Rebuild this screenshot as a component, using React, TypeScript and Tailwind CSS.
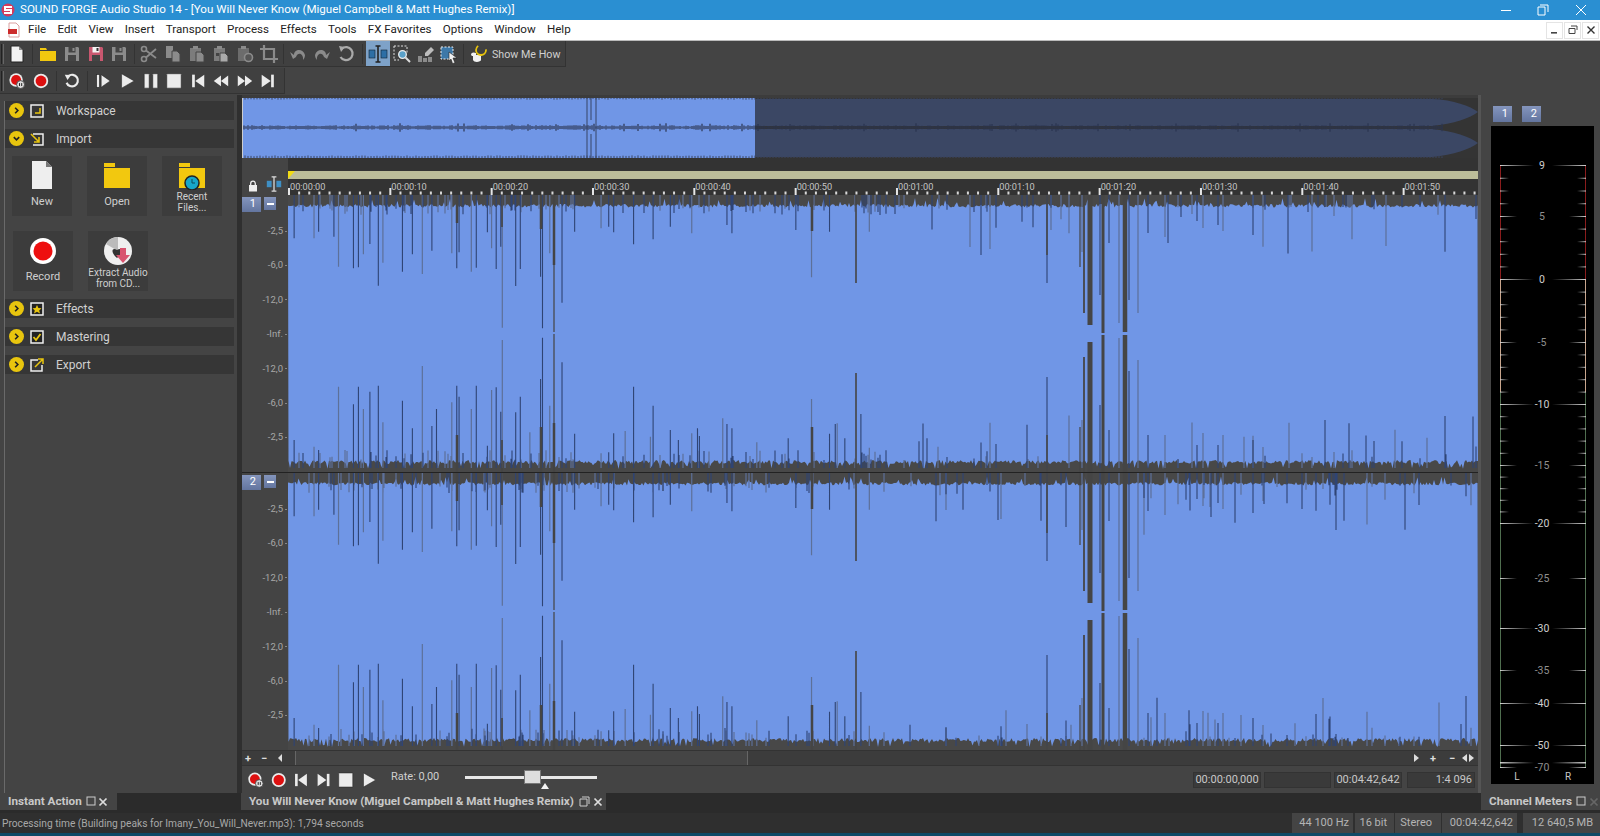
import React, { useMemo } from "react";

function mk(seed: number) {
  let a = seed >>> 0;
  return () => {
    a = (a + 0x6d2b79f5) >>> 0;
    let t = a;
    t = Math.imul(t ^ (t >>> 15), t | 1);
    t ^= t + Math.imul(t ^ (t >>> 7), t | 61);
    return ((t ^ (t >>> 14)) >>> 0) / 4294967296;
  };
}

const W = 1190;
const H = 277;
const SP: number[][] = [
  [16,130,735],[68,130,755],[80,110,765],[120,125,0],[132,215,575],[171,220,628],[184,217,575],[197,178,642],[214,147,590],[236,272,572],[248,203,682],[299,230,617],[325,178,700],[351,237,513],[376,167,693],[388,0,642],[428,175,622],[441,220,572],[447,172,605],[479,230,642],[492,218,572],[521,112,752],[532,160,585],[544,222,577],[556,155,650],[560,398,435],[595,273,652],[607,222,605],[632,0,712],[660,245,552],[665,400,428],[684,175,632],[716,323,502],[749,110,716],[818,100,775],[838,95,772],[851,112,715],[881,0,708],[903,148,575],[954,133,632],[947,0,725],[999,95,705],[1020,0,735],[1055,115,715],[1070,0,700],[1075,0,723],[1136,0,670],[1147,90,687],[1160,115,700],[1225,0,742],[1307,0,730],[1327,105,0],[1368,247,612],[1415,110,716],[1430,0,687],[1435,0,685],[1455,0,730],[1497,0,657],[1519,110,758],
];
const COLS: number[][] = [
  [169,2.5,28,240],[214,1.6,32,245],[253,2.5,34,232],[266,2.5,70,228],[266,1.2,137,139],[524,2.5,36,232],[568,1.6,88,178],
  [796,1.8,118,162],[802,5,130,147],[815,3,138,140],[837,4.5,137,140],[759,1.5,60,240],[792,1.2,72,232],
];
const EXTRA: number[][] = [
  [759,88,182,0],[794,57,225,1],[812,100,210,0],[821,48,235,0],[831,128,143,1],[841,105,176,0],[850,118,165,1],[860,38,240,0],[877,42,240,1],[909,26,250,0],[915,33,238,1],[930,30,250,0],[935,36,240,1],[965,40,245,0],[975,28,252,1],
];

function Wave({ seed }: { seed: number }) {
  const d = useMemo(() => {
    const r = mk(seed);
    let top = "";
    for (let x = 0; x <= W; x += 1.5) {
      const big = r() > 0.94;
      top += `L${x} ${big ? 3 + r() * 5 : 9 + r() * 3.5}`;
    }
    let bot = "";
    for (let x = W; x >= 0; x -= 1.5) {
      const big = r() > 0.9;
      bot += `L${x} ${big ? 270 + r() * 4 : 265 + r() * 4}`;
    }
    const blue = "M" + top.slice(1) + bot + "Z";
    let navy = "";
    let gray = "";
    const add = (x: number, t: number, b: number, dark: boolean) => {
      let s = "";
      if (t > 0) s += `M${x} 0V${t}`;
      if (b > 0) s += `M${x} ${b}V${H - 4}`;
      if (dark) navy += s;
      else gray += s;
    };
    SP.forEach(([x, t, b], i) => add(x / 2.613, t / 3, b / 3, i % 3 !== 1));
    EXTRA.forEach(([x, t, b, g]) => add(x, t, b, !g));
    for (let i = 0; i < 90; i++) {
      const x = 600 + r() * 590;
      if (x > 788 && x < 850) continue;
      const t = 12 + Math.pow(r(), 3) * 50;
      const b = H - 12 - Math.pow(r(), 2) * 45;
      add(Math.round(x), r() > 0.35 ? t : 0, r() > 0.45 ? b : 0, r() > 0.45);
    }
    for (let i = 0; i < 70; i++) {
      const x = r() * 600;
      add(Math.round(x), 12 + r() * 8, H - 12 - r() * 10, r() > 0.5);
    }
    return { blue, navy, gray };
  }, [seed]);
  return (
    <svg width={W} height={H} viewBox={`0 0 ${W} ${H}`} className="block">
      <rect width={W} height={H} fill="#484848" />
      <path d={d.blue} fill="#7096e6" />
      <path d={d.gray} stroke="#5d7099" strokeWidth="1.2" fill="none" />
      <path d={d.navy} stroke="#2f4474" strokeWidth="1.1" fill="none" />
      {COLS.map(([x, w, t, b], i) => (
        <g key={i} fill="#454545">
          <rect x={x - w / 2} y="0" width={w} height={t} />
          <rect x={x - w / 2} y={b} width={w} height={H - b} />
        </g>
      ))}
    </svg>
  );
}

function Overview() {
  const d = useMemo(() => {
    const r = mk(77);
    const OW = 1236;
    let line = "";
    for (let x = 0; x <= 1200; x += 2) {
      const h = 1.1 + r() * 1.2 + (r() > 0.94 ? 2 : 0);
      line += `M${x} ${29.5 - h}V${29.5 + h}`;
    }
    let edge = "";
    for (let x = 0; x <= 1200; x += 3) {
      edge += `M${x} 0V${0.8 + r()}M${x} 60V${58.4 - r()}`;
    }
    return { line, edge, OW };
  }, []);
  const end = "M513 1H1190C1212 2 1228 8 1236 14C1228 20 1212 26 1190 28H513ZM513 31H1190C1212 33 1228 39 1236 45C1228 51 1212 57 1190 59H513Z";
  return (
    <svg width="1236" height="60" viewBox="0 0 1236 60" className="block">
      <rect width="1236" height="60" fill="#343434" />
      <path d={end} fill="#3b4764" />
      <rect x="0" y="0" width="513" height="60" fill="#7096e6" />
      <path d={d.line} stroke="#2b3550" strokeWidth="1.2" />
      <path d={d.edge} stroke="#3a4560" strokeWidth="1" />
      <path d="M345 0V60M349 0V22M349 36V60M354 0V60" stroke="#364566" strokeWidth="1" />
      <rect x="0" y="0" width="1" height="60" fill="#ccc" />
    </svg>
  );
}

function Meter() {
  const majors: [string, number, boolean][] = [
    ["9", 165, true],["5", 216, false],["0", 279, true],["-5", 342, false],["-10", 404, true],["-15", 465, false],["-20", 523, true],["-25", 578, false],["-30", 628, true],["-35", 670, false],["-40", 703, true],["-50", 745, true],["-70", 767, false],
  ];
  const minors: number[] = [];
  for (let i = 0; i < 6; i++) {
    const [, a] = majors[i];
    const [, b] = majors[i + 1];
    const n = i === 0 ? 4 : 5;
    for (let k = 1; k < n; k++) minors.push(a + ((b - a) * k) / n);
  }
  const o = (y: number) => y - 126;
  return (
    <svg width="103" height="658" viewBox="0 0 103 658" className="block">
      <defs>
        <linearGradient id="gl"><stop offset="0" stopColor="#d0d0d0" /><stop offset="1" stopColor="#d0d0d0" stopOpacity="0" /></linearGradient>
        <linearGradient id="gr"><stop offset="0" stopColor="#d0d0d0" stopOpacity="0" /><stop offset="1" stopColor="#d0d0d0" /></linearGradient>
      </defs>
      <path d={`M9.5 ${o(165)}V${o(279)}M94.5 ${o(165)}V${o(279)}`} stroke="#8a1c1c" />
      <path d={`M9.5 ${o(279)}V${o(392)}M94.5 ${o(279)}V${o(392)}`} stroke="#c8a58c" />
      <path d={`M9.5 ${o(392)}V${o(767)}M94.5 ${o(392)}V${o(767)}`} stroke="#4f6e4f" />
      {minors.map((y) => (
        <g key={y}>
          <rect x="9" y={o(y)} width="9" height="1" fill="url(#gl)" />
          <rect x="86" y={o(y)} width="9" height="1" fill="url(#gr)" />
        </g>
      ))}
      {majors.map(([t, y, strong]) => (
        <g key={t}>
          <rect x="9" y={o(y)} width={strong ? 34 : 17} height={1} fill="url(#gl)" />
          <rect x={strong ? 61 : 78} y={o(y)} width={strong ? 34 : 17} height={1} fill="url(#gr)" />
          <text x="51" y={o(y) + 4} textAnchor="middle" fontSize="10.5" fill={strong ? "#cfcfcf" : "#8f8f8f"} fontFamily="Roboto, sans-serif">{t}</text>
        </g>
      ))}
      <rect x="9" y={o(762)} width="34" height="1.5" fill="url(#gl)" />
      <rect x="61" y={o(762)} width="34" height="1.5" fill="url(#gr)" />
      <text x="26" y={o(780)} textAnchor="middle" fontSize="10" fill="#c8c8c8" fontFamily="Roboto, sans-serif">L</text>
      <text x="77" y={o(780)} textAnchor="middle" fontSize="10" fill="#c8c8c8" fontFamily="Roboto, sans-serif">R</text>
    </svg>
  );
}

const Ic = ({ children, s = 20 }: { children: React.ReactNode; s?: number }) => (
  <svg width={s} height={s} viewBox="0 0 20 20" className="block">{children}</svg>
);
const G = "#8b8b8b";
const L = "#ececec";
const Floppy = ({ c = G, red = false }: { c?: string; red?: boolean }) => (
  <Ic>
    <path d="M3 3H16L17 4V17H3Z" fill={red ? "#c9576f" : c} />
    <rect x="6.5" y="3" width="7" height="5.5" fill={red ? "#f4f4f4" : "#444"} />
    <rect x="6" y="11" width="8" height="6" fill="#444" />
    <rect x="10.5" y="4" width="2" height="3" fill={red ? "#333" : c} />
  </Ic>
);
const icons: Record<string, React.ReactNode> = {
  doc: <Ic><path d="M4 2H12L16 6V18H4Z" fill="#f2f2f2" stroke="#222" strokeWidth="1" /><path d="M12 2V6H16" fill="#888" /></Ic>,
  folder: <Ic><path d="M2 4H8L9 6H2ZM2 7H18V17H2Z" fill="#f2c80f" /></Ic>,
  save: <Floppy />,
  saveR: <Floppy red />,
  cut: <Ic><circle cx="5" cy="5" r="2.5" fill="none" stroke={G} strokeWidth="1.6" /><circle cx="5" cy="15" r="2.5" fill="none" stroke={G} strokeWidth="1.6" /><path d="M7 6.5L17 14M7 13.5L17 5" stroke={G} strokeWidth="1.8" /></Ic>,
  copy: <Ic><path d="M3 2H10V14H3Z" fill={G} /><path d="M9 7H14L17 10V18H9Z" fill={G} stroke="#444" /></Ic>,
  paste: <Ic><path d="M3 4H14V17H3Z" fill="#7c7c7c" /><rect x="6" y="2" width="5" height="3" fill={G} /><path d="M9 8H14L17 11V18H9Z" fill={G} stroke="#444" /></Ic>,
  paste2: <Ic><path d="M3 4H14V17H3Z" fill="#7c7c7c" /><rect x="6" y="2" width="5" height="3" fill={G} /><path d="M9 9H14L17 12V18H9Z" fill="#aaa" stroke="#444" /><rect x="5" y="9" width="3" height="3" fill="#444" /></Ic>,
  paste3: <Ic><path d="M3 4H14V17H3Z" fill="#6c6c6c" /><rect x="6" y="2" width="5" height="3" fill={G} /><circle cx="13.5" cy="13.5" r="4" fill="#555" stroke={G} strokeWidth="1.6" /></Ic>,
  crop: <Ic><path d="M5 1V15H19M1 5H15V19" fill="none" stroke={G} strokeWidth="2.2" /></Ic>,
  undo: <Ic><path d="M6 11C6 5 15 4 17 11C17 13 16 15 15 16C16 10 10 7 8 13L5 15L2 8Z" fill={G} /></Ic>,
  redo: <Ic><path d="M14 11C14 5 5 4 3 11C3 13 4 15 5 16C4 10 10 7 12 13L15 15L18 8Z" fill={G} /></Ic>,
  reset: <Ic><path d="M6 4.5A6.5 6.5 0 1 1 4.5 13" fill="none" stroke="#aaa" strokeWidth="2.2" /><path d="M3 2L9 3L5 8Z" fill="#aaa" /></Ic>,
  ibeam: <Ic><rect x="1" y="6" width="6" height="8" fill="#2d6ea5" stroke="#123" strokeWidth=".6" /><rect x="13" y="6" width="6" height="8" fill="#2d6ea5" stroke="#123" strokeWidth=".6" /><path d="M10 2V18M7.5 2H12.5M7.5 18H12.5" stroke="#222" strokeWidth="1.6" /></Ic>,
  zoom: <Ic><path d="M2 2H15V10" fill="none" stroke="#ddd" strokeDasharray="2 1.5" /><path d="M2 2V16H7" fill="none" stroke="#ddd" strokeDasharray="2 1.5" /><circle cx="10.5" cy="10.5" r="3.8" fill="#5aa0c8" stroke="#eee" strokeWidth="1.3" /><path d="M13.5 13.5L18 18" stroke="#ddd" strokeWidth="2" /></Ic>,
  pencil: <Ic><path d="M2 12H6V18H2ZM7 14H11V18H7ZM12 13H16V18H12Z" fill="#8b8b8b" /><path d="M9 9L15 3L18 6L12 12H9Z" fill="#bcbcbc" /></Ic>,
  select: <Ic><rect x="2" y="3" width="12" height="12" fill="#3d78a8" stroke="#eee" strokeDasharray="2 1.5" /><path d="M10 8L18 14H14L16 19L13.5 19.5L12 15L10 17Z" fill="#f2f2f2" stroke="#222" strokeWidth=".6" /></Ic>,
  hand: <Ic><path d="M3 11C3 8 6 8 8 9V12H4ZM5 11H13V16C13 18 6 19 5 16Z" fill="#f2f2f2" /><circle cx="13" cy="6" r="5" fill="none" stroke="#e7c30e" strokeWidth="1.8" strokeDasharray="20 10" /><rect x="12.4" y="10" width="1.6" height="2" fill="#e7c30e" /></Ic>,
  recT: <Ic><circle cx="9" cy="9" r="7.5" fill="#ececec" /><circle cx="9" cy="9" r="5.6" fill="#dd1010" /><circle cx="14" cy="14" r="4.4" fill="#ddd" stroke="#444" /><path d="M12.8 12.4V15.6M15.2 12.4V15.6" stroke="#222" strokeWidth="1.1" /></Ic>,
  rec: <Ic><circle cx="10" cy="10" r="8" fill="#ececec" /><circle cx="10" cy="10" r="6" fill="#dd1010" /></Ic>,
  loop: <Ic><path d="M6 4.5A6.5 6.5 0 1 1 4 12" fill="none" stroke={L} strokeWidth="2.4" /><path d="M2 3L9 3.5L5 9Z" fill={L} /></Ic>,
  playSel: <Ic><rect x="3" y="3" width="3" height="14" fill={L} stroke="#222" strokeWidth=".6" /><path d="M8 3L18 10L8 17Z" fill={L} stroke="#222" strokeWidth=".6" /></Ic>,
  play: <Ic><path d="M4 2L18 10L4 18Z" fill={L} stroke="#222" strokeWidth=".6" /></Ic>,
  pause: <Ic><rect x="2.5" y="2" width="5.5" height="16" rx=".5" fill={L} stroke="#222" strokeWidth=".6" /><rect x="12" y="2" width="5.5" height="16" rx=".5" fill={L} stroke="#222" strokeWidth=".6" /></Ic>,
  stop: <Ic><rect x="2" y="2" width="16" height="16" rx=".5" fill={L} stroke="#222" strokeWidth=".6" /></Ic>,
  prev: <Ic><rect x="3.5" y="3" width="3" height="14" fill={L} /><path d="M17 3V17L7 10Z" fill={L} /></Ic>,
  rew: <Ic><path d="M10 4V16L2 10ZM18 4V16L10 10Z" fill={L} /></Ic>,
  ffw: <Ic><path d="M2 4V16L10 10ZM10 4V16L18 10Z" fill={L} /></Ic>,
  next: <Ic><rect x="13.5" y="3" width="3" height="14" fill={L} /><path d="M3 3V17L13 10Z" fill={L} /></Ic>,
};

const Handle = () => (
  <div className="flex h-[20px] w-[5px] shrink-0 gap-px pl-px">
    <div className="w-px bg-[#222]" />
    <div className="w-px bg-[#666]" />
  </div>
);
const Sep = ({ w }: { w: string }) => (
  <div className={`flex h-[20px] shrink-0 justify-center ${w}`}>
    <div className="w-px bg-[#333]" />
  </div>
);
const Slot = ({ i, active, w = "w-[24px]", small }: { i: string; active?: boolean; w?: string; small?: boolean }) => (
  <div className={`flex h-[25px] shrink-0 items-center justify-center ${w} ${active ? "bg-[#7ea2c8]" : ""} ${small ? "scale-90" : ""}`}>{icons[i]}</div>
);

const Head = ({ open, label, glyph }: { open?: boolean; label: string; glyph: React.ReactNode }) => (
  <div className="flex h-[19px] items-center bg-[#363636]">
    <div className="ml-[4px] flex h-[15px] w-[15px] items-center justify-center rounded-full bg-[#e8c50e]">
      <svg width="9" height="9" viewBox="0 0 10 10">
        <path d={open ? "M2 3.5L5 6.5L8 3.5" : "M3.5 2L6.5 5L3.5 8"} fill="none" stroke="#222" strokeWidth="1.8" />
      </svg>
    </div>
    <svg width="14" height="14" viewBox="0 0 14 14" className="ml-[6px]">{glyph}</svg>
    <span className="ml-[12px] text-[12px] text-[#d0d0d0]">{label}</span>
  </div>
);
const Box = "M1 1H13V13H1Z";
const Tile = ({ icon, children, top = "pt-[4px]" }: { icon: React.ReactNode; children: React.ReactNode; top?: string }) => (
  <div className={`flex h-[60px] w-[60px] flex-col items-center bg-[#3c3c3c] text-center text-[10px] leading-[10.5px] text-[#cfcfcf] ${top}`}>
    <div className="h-[32px]">{icon}</div>
    {children}
  </div>
);

const labels = ["00:00:00","00:00:10","00:00:20","00:00:30","00:00:40","00:00:50","00:01:00","00:01:10","00:01:20","00:01:30","00:01:40","00:01:50"];
const db = ["-2,5","-6,0","-12,0","-Inf.","-12,0","-6,0","-2,5"];

const Channel = ({ n, seed }: { n: string; seed: number }) => (
  <div className="flex h-[277px]">
    <div className="w-[46px] shrink-0">
      <div className="flex h-[19px] gap-[3px] pt-[2px]">
        <div className="flex h-[15px] w-[19px] items-center justify-end bg-gradient-to-b from-[#8495bd] to-[#63759f] pr-[5px] text-[11px] text-white">{n}</div>
        <div className="flex h-[13px] w-[12px] items-center justify-center bg-gradient-to-b from-[#8495bd] to-[#63759f]"><div className="h-[2px] w-[7px] bg-white" /></div>
      </div>
      {db.map((t, i) => (
        <div key={i} className="flex h-[34.4px] items-center justify-end pr-[1px] text-[9.5px] text-[#a8a8a8]">
          {t}<span className="ml-[2px] h-px w-[2px] bg-[#888]" />
        </div>
      ))}
    </div>
    <Wave seed={seed} />
  </div>
);

const T = ({ w, right, children }: { w: string; right?: boolean; children?: React.ReactNode }) => (
  <div className={`flex h-[16px] items-center border border-[#333] bg-[#3a3a3a] px-[2px] text-[11px] text-[#c8c8c8] ${w} ${right ? "justify-end" : "justify-center"}`}>{children}</div>
);
const SB = ({ w, pr, children }: { w: string; pr: string; children: React.ReactNode }) => (
  <div className={`flex h-[20px] items-center justify-end bg-[#444] pt-px text-[11px] text-[#b4b4b4] ${w} ${pr}`}>{children}</div>
);

export default function App() {
  const rulerTicks = useMemo(() => {
    const out: React.ReactNode[] = [];
    for (let i = 0; i < 118; i++) {
      const x = i * 10.133;
      out.push(
        i % 10 === 0 ? <rect key={i} x={x} y="2" width="2" height="7" fill="#e6e6e6" /> : <rect key={i} x={x} y="5.5" width="2" height="3" fill="#d8d8d8" />
      );
    }
    return out;
  }, []);
  const cross = "M4 4L12 12M12 4L4 12";
  return (
    <div className="flex h-[836px] w-[1600px] flex-col overflow-hidden bg-[#444444] [font-family:Roboto,'Liberation_Sans',sans-serif]">
      {/* title */}
      <div className="flex h-[20px] shrink-0 items-center bg-[#2a8fd2] text-[11.6px] text-white">
        <svg width="14" height="14" viewBox="0 0 14 14" className="ml-[1px]">
          <circle cx="7" cy="7" r="6.5" fill="#d5395a" />
          <path d="M3 3H11V5H5V6H11V11H3V9H9V8H3Z" fill="#fff" />
        </svg>
        <span className="ml-[5px]">SOUND FORGE Audio Studio 14 - [You Will Never Know (Miguel Campbell &amp; Matt Hughes Remix)]</span>
        <div className="ml-auto flex items-center">
          <div className="mr-[26px] h-px w-[10px] bg-white" />
          <svg width="12" height="12" viewBox="0 0 12 12" className="mr-[26px]"><path d="M3 1H11V8M1 3H8V11H1Z" fill="none" stroke="#fff" /></svg>
          <svg width="12" height="12" viewBox="0 0 12 12" className="mr-[13px]"><path d="M1 1L11 11M11 1L1 11" stroke="#fff" strokeWidth="1" /></svg>
        </div>
      </div>
      {/* menu */}
      <div className="flex h-[21px] shrink-0 items-center border-b border-[#bbb] bg-white text-[11.6px] text-[#222]">
        <svg width="14" height="16" viewBox="0 0 14 16" className="ml-[7px]">
          <path d="M2 1H9L12 4V15H2Z" fill="#fff" stroke="#d9a0a0" />
          <rect x="1" y="7" width="9" height="5" fill="#cc2b2b" />
        </svg>
        <div className="ml-[7px] flex gap-[11.3px]">
          {["File","Edit","View","Insert","Transport","Process","Effects","Tools","FX Favorites","Options","Window","Help"].map((m) => (
            <span key={m}>{m}</span>
          ))}
        </div>
        <div className="ml-auto mr-[1px] flex gap-px">
          {["min","max","x"].map((k) => (
            <div key={k} className="flex h-[17px] w-[17px] items-center justify-center border border-[#e4e4e4] bg-white">
              <svg width="12" height="12" viewBox="0 0 12 12">
                {k === "min" && <rect x="2" y="8" width="6" height="1.6" fill="#444" />}
                {k === "max" && <path d="M4 2H10V6M2 4.5H8V9.5H2Z" fill="none" stroke="#444" />}
                {k === "x" && <path d="M2.5 2.5L9.5 9.5M9.5 2.5L2.5 9.5" stroke="#333" strokeWidth="1.4" />}
              </svg>
            </div>
          ))}
        </div>
      </div>
      {/* toolbars */}
      <div className="flex h-[27px] shrink-0">
        <div className="flex h-[26px] w-[566px] items-center border-b border-r border-[#333] bg-[#404040]">
          <Handle />
          <Slot i="doc" />
          <Sep w="w-[7px]" />
          <Slot i="folder" /><Slot i="save" /><Slot i="saveR" w="w-[23px]" /><Slot i="save" />
          <Sep w="w-[6px]" />
          <Slot i="cut" /><Slot i="copy" /><Slot i="paste" /><Slot i="paste2" /><Slot i="paste3" /><Slot i="crop" />
          <Sep w="w-[5px]" />
          <Slot i="undo" /><Slot i="redo" /><Slot i="reset" />
          <Sep w="w-[8px]" />
          <Slot i="ibeam" active /><Slot i="zoom" /><Slot i="pencil" w="w-[23px]" /><Slot i="select" w="w-[23px]" />
          <Sep w="w-[6px]" />
          <Slot i="hand" />
          <span className="ml-[2px] pt-[3px] text-[10.7px] text-[#d0d0d0]">Show Me How</span>
        </div>
      </div>
      <div className="flex h-[27px] shrink-0">
        <div className="flex h-[26px] w-[285px] items-center border-b border-r border-[#333] bg-[#404040]">
          <Handle />
          <Slot i="recT" small /><Slot i="rec" small />
          <Sep w="w-[7px]" />
          <Slot i="loop" small />
          <Sep w="w-[7px]" />
          <Slot i="playSel" small /><Slot i="play" w="w-[23.5px]" small /><Slot i="pause" w="w-[23.5px]" small /><Slot i="stop" w="w-[23.5px]" small />
          <Slot i="prev" w="w-[23.5px]" small /><Slot i="rew" w="w-[23.5px]" small /><Slot i="ffw" w="w-[23.5px]" small /><Slot i="next" w="w-[23.5px]" small />
        </div>
      </div>
      {/* main */}
      <div className="flex h-[698px] shrink-0">
        {/* left */}
        <div className="w-[237px] shrink-0 border-l-[4px] border-l-[#444] pt-[6px]">
          <div className="h-full border-l border-[#6a6a6a] pr-[3px]">
            <Head label="Workspace" glyph={<><path d={Box} fill="none" stroke="#eee" strokeWidth="1.5" /><path d="M10 4V9H5" fill="none" stroke="#e8c50e" strokeWidth="1.5" /></>} />
            <div className="mt-[9px]"><Head open label="Import" glyph={<><path d="M3 2H13V13H3" fill="none" stroke="#eee" strokeWidth="1.5" /><path d="M1 2L9 10M9 5V10H4" fill="none" stroke="#e8c50e" strokeWidth="1.6" /></>} /></div>
            <div className="flex gap-[15px] pl-[7px] pt-[8px]">
              <Tile icon={<svg width="24" height="30" viewBox="0 0 24 30"><path d="M2 1H16L22 7V29H2Z" fill="#eeeeee" /><path d="M16 1V7H22" fill="#777" /></svg>}>
                <span className="mt-[5px] text-[11px]">New</span>
              </Tile>
              <Tile icon={<svg width="30" height="30" viewBox="0 0 30 30"><path d="M2 3H13V7H2ZM2 8H28V28H2Z" fill="#f2c80f" /></svg>}>
                <span className="mt-[5px] text-[11px]">Open</span>
              </Tile>
              <Tile icon={<svg width="30" height="30" viewBox="0 0 30 30"><path d="M2 3H13V7H2ZM2 8H28V28H2Z" fill="#f2c80f" /><circle cx="15" cy="23" r="7" fill="#17a6c9" stroke="#222" strokeWidth="1.5" /><path d="M15 19V23H18" stroke="#0a4a5a" fill="none" /></svg>}>
                Recent<br />Files...
              </Tile>
            </div>
            <div className="flex gap-[15px] pl-[8px] pt-[15px]">
              <Tile top="pt-[6px]" icon={<svg width="28" height="28" viewBox="0 0 28 28"><circle cx="14" cy="14" r="13" fill="#fff" /><circle cx="14" cy="14" r="9.5" fill="#ee0f0f" /></svg>}>
                <span className="mt-[3px] text-[11px]">Record</span>
              </Tile>
              <Tile top="pt-[6px]" icon={<svg width="30" height="30" viewBox="0 0 30 30"><circle cx="15" cy="14" r="14" fill="#efefef" /><path d="M15 14L3 7A14 14 0 0 1 15 0Z" fill="#bbb" /><path d="M14 21C7 15 9 10 14 13C19 10 21 15 14 21Z" fill="#333" /><path d="M17 11H23V18H27L20 26L13 18H17Z" fill="#d8536e" /></svg>}>
                <span className="-mt-[1px]">Extract Audio<br />from CD...</span>
              </Tile>
            </div>
            <div className="mt-[8px]"><Head label="Effects" glyph={<><path d={Box} fill="#222" stroke="#eee" strokeWidth="1.5" /><path d="M7 3L8.4 6L11.5 6.3L9.2 8.4L10 11.5L7 9.8L4 11.5L4.8 8.4L2.5 6.3L5.6 6Z" fill="#e8c50e" /></>} /></div>
            <div className="mt-[9px]"><Head label="Mastering" glyph={<><path d={Box} fill="#222" stroke="#eee" strokeWidth="1.5" /><path d="M3.5 7L6 10L10.5 4" fill="none" stroke="#e8c50e" strokeWidth="1.8" /></>} /></div>
            <div className="mt-[9px]"><Head label="Export" glyph={<><path d="M8 2H1V13H12V7" fill="none" stroke="#eee" strokeWidth="1.5" /><path d="M5 9L13 1M8 1H13V6" fill="none" stroke="#e8c50e" strokeWidth="1.5" /></>} /></div>
          </div>
        </div>
        <div className="w-[5px] shrink-0 bg-[#2f2f2f]" />
        {/* centre */}
        <div className="w-[1239px] shrink-0 border-r-[3px] border-r-[#555]">
          <div className="h-[3px] bg-[#3c3c3c]" />
          <Overview />
          <div className="flex h-[37px]">
            <div className="flex w-[46px] shrink-0 items-end gap-[8px] bg-[#444] pb-[3px] pl-[6px]">
              <svg width="10" height="12" viewBox="0 0 10 12"><rect x="1" y="5" width="8" height="6.5" fill="#eee" /><path d="M2.7 5V3.5A2.3 2.3 0 0 1 7.3 3.5V5" fill="none" stroke="#eee" strokeWidth="1.3" /></svg>
              <svg width="16" height="16" viewBox="0 0 20 20"><rect x="1" y="6" width="6" height="8" fill="#3f8fc4" /><rect x="13" y="6" width="6" height="8" fill="#3f8fc4" /><path d="M10 1V19M7 1H13M7 19H13" stroke="#ddd" strokeWidth="1.6" /></svg>
            </div>
            <div className="w-[1190px] shrink-0 bg-[#333]">
              <div className="h-[13px]" />
              <div className="h-[8px] bg-[#bcbd9a]">
                <svg width="8" height="8" viewBox="0 0 8 8" className="block"><path d="M0 8V0H7Z" fill="#f2dc14" /></svg>
              </div>
              <div className="flex h-[13px] items-end overflow-hidden">
                {labels.map((l) => (
                  <span key={l} className="w-[101.33px] shrink-0 pl-[2px] text-[9.2px] leading-[11px] text-[#c4c4c4]">{l}</span>
                ))}
              </div>
              <svg width="1190" height="9" viewBox="0 0 1190 9" className="-mt-[6px] block">{rulerTicks}</svg>
            </div>
          </div>
          <Channel n="1" seed={11} />
          <div className="h-px bg-[#222]" />
          <Channel n="2" seed={29} />
          {/* scroll */}
          <div className="flex h-[16px] items-center border-y border-[#333] bg-[#3c3c3c] text-[#ddd]">
            <span className="w-[12px] text-center text-[11px] font-bold leading-none">+</span>
            <span className="ml-[2px] w-[16px] text-center text-[11px] font-bold leading-none">−</span>
            <svg width="10" height="10" viewBox="0 0 10 10" className="ml-[4px]"><path d="M6 1V9L2 5Z" fill="#ddd" /></svg>
            <div className="ml-[9px] h-full w-[453px] border-x border-[#666] bg-[#454545]" />
            <svg width="10" height="10" viewBox="0 0 10 10" className="ml-auto"><path d="M3 1V9L8 5Z" fill="#ddd" /></svg>
            <span className="ml-[5px] w-[14px] text-center text-[11px] font-bold leading-none">+</span>
            <span className="ml-[5px] w-[14px] text-center text-[11px] font-bold leading-none">−</span>
            <svg width="14" height="10" viewBox="0 0 14 10" className="ml-[2px] mr-[3px]"><path d="M6 1V9L1 5ZM8 1V9L13 5Z" fill="#ddd" /></svg>
          </div>
          {/* transport */}
          <div className="flex h-[28px] items-center">
            <div className="ml-[4px] flex items-center gap-[3px]">
              {["recT","rec","prev","next","stop","play"].map((k) => (
                <div key={k} className="flex w-[19.5px] scale-90 justify-center">{icons[k]}</div>
              ))}
            </div>
            <span className="ml-[13px] -mt-[5px] text-[11px] text-[#cfcfcf]">Rate: 0,00</span>
            <div className="relative ml-[26px] -mt-[6px] flex h-[16px] w-[132px] items-center">
              <div className="h-[3px] w-[59px] bg-[#e8e8e8]" />
              <div className="h-[14px] w-[17px] border border-[#777] bg-[#ddd]" />
              <div className="h-[3px] w-[56px] bg-[#e8e8e8]" />
              <svg width="8" height="6" viewBox="0 0 8 6" className="absolute left-[76px] top-[14px]"><path d="M4 0L8 6H0Z" fill="#f2f2f2" /></svg>
            </div>
            <div className="ml-auto mr-[3px] flex gap-[3px]">
              <T w="w-[68px]">00:00:00,000</T>
              <T w="w-[67px]" />
              <T w="w-[68px]">00:04:42,642</T>
              <div className="ml-[2px]"><T w="w-[68px]" right>1:4 096</T></div>
            </div>
          </div>
        </div>
        {/* meter */}
        <div className="w-[119px] shrink-0 pl-[10px]">
          <div className="flex h-[11px]" />
          <div className="flex h-[20px] gap-[10px] pl-[2px]">
            {["1","2"].map((n) => (
              <div key={n} className="flex h-[16px] w-[19px] items-center justify-end bg-gradient-to-b from-[#8495bd] to-[#63759f] pr-[4px] text-[11px] text-white">{n}</div>
            ))}
          </div>
          <div className="h-[658px] w-[103px] bg-black"><Meter /></div>
        </div>
      </div>
      {/* tabs */}
      <div className="flex h-[20px] shrink-0 bg-[#2b2b2b] text-[11.7px] font-bold text-[#c8c8c8]">
        <div className="flex h-[17px] w-[117px] shrink-0 items-center bg-[#444] pl-[8px]">
          <span>Instant Action</span>
          <svg width="11" height="11" viewBox="0 0 11 11" className="ml-[4px]"><rect x="1" y="1" width="8" height="8" fill="none" stroke="#ccc" /></svg>
          <svg width="14" height="14" viewBox="0 0 16 16" className="ml-[-1px]"><path d={cross} stroke="#ddd" strokeWidth="2" /></svg>
        </div>
        <div className="ml-[124px] flex h-[17px] w-[365px] shrink-0 items-center bg-[#444] pl-[8px]">
          <span>You Will Never Know (Miguel Campbell &amp; Matt Hughes Remix)</span>
          <svg width="11" height="11" viewBox="0 0 11 11" className="ml-[5px]"><path d="M3 1H10V8M1 3H8V10H1Z" fill="none" stroke="#ccc" /></svg>
          <svg width="14" height="14" viewBox="0 0 16 16" className="ml-[1px]"><path d={cross} stroke="#ddd" strokeWidth="2" /></svg>
        </div>
        <div className="ml-[875px] flex h-[17px] w-[119px] shrink-0 items-center bg-[#444] pl-[8px]">
          <span className="whitespace-nowrap">Channel Meters</span>
          <svg width="11" height="11" viewBox="0 0 11 11" className="ml-[4px] shrink-0"><rect x="1" y="1" width="8" height="8" fill="none" stroke="#ccc" /></svg>
          <svg width="14" height="14" viewBox="0 0 16 16" className="shrink-0"><path d={cross} stroke="#666" strokeWidth="2" /></svg>
        </div>
      </div>
      {/* status */}
      <div className="flex h-[20px] shrink-0 items-center bg-[#2f2f2f] text-[#a8a8a8]">
        <span className="pl-[2px] pt-px text-[10.2px]">Processing time (Building peaks for Imany_You_Will_Never.mp3): 1,794 seconds</span>
        <div className="ml-auto flex">
          <SB w="w-[61px]" pr="pr-[4px]">44 100 Hz</SB>
          <div className="ml-[2px]"><SB w="w-[39px]" pr="pr-[7px]">16 bit</SB></div>
          <div className="ml-px"><SB w="w-[46px]" pr="pr-[9px]">Stereo</SB></div>
          <div className="ml-px"><SB w="w-[75px]" pr="pr-[4px]">00:04:42,642</SB></div>
          <div className="ml-[6px]"><SB w="w-[77px]" pr="pr-[7px]">12 640,5 MB</SB></div>
        </div>
      </div>
      <div className="h-[3px] shrink-0 bg-[#0f4a66]" />
    </div>
  );
}
